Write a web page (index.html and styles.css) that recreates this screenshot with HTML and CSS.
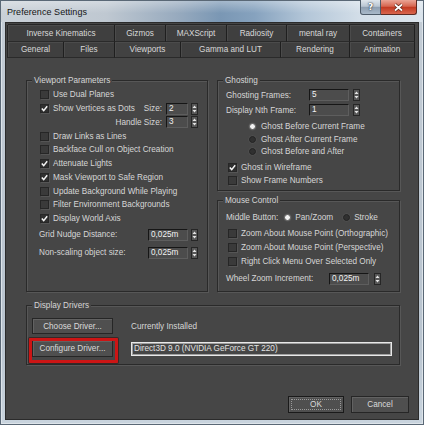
FILE: index.html
```html
<!DOCTYPE html>
<html>
<head>
<meta charset="utf-8">
<title>Preference Settings</title>
<link rel="stylesheet" href="styles.css">
</head>
<body>
<div class="window">
  <div class="titlebar">
    <span class="title">Preference Settings</span>
    <div class="capbtns">
      <div class="capbtn help">?</div>
      <div class="capbtn close"><svg width="11" height="9" viewBox="0 0 11 9"><path d="M2 1.5 9 7.5 M9 1.5 2 7.5" class="xo"/><path d="M2 1.5 9 7.5 M9 1.5 2 7.5" class="xi"/></svg></div>
    </div>
  </div>
  <div class="client">
    <div class="tabs">
      <div class="tabrow row1">
        <div class="tab">Inverse Kinematics</div>
        <div class="tab">Gizmos</div>
        <div class="tab">MAXScript</div>
        <div class="tab">Radiosity</div>
        <div class="tab">mental ray</div>
        <div class="tab">Containers</div>
      </div>
      <div class="tabrow row2">
        <div class="tab">General</div>
        <div class="tab">Files</div>
        <div class="tab active">Viewports</div>
        <div class="tab">Gamma and LUT</div>
        <div class="tab">Rendering</div>
        <div class="tab">Animation</div>
      </div>
    </div>

    <div class="cols">
      <div class="group vp">
        <span class="legend">Viewport Parameters</span>
        <div class="row c"><span class="cb"></span><span>Use Dual Planes</span></div>
        <div class="row c"><span class="cb on"><svg width="9" height="9" viewBox="0 0 9 9"><path d="M1.8 4.4 3.7 6.6 7.2 2.2"/></svg></span><span>Show Vertices as Dots</span><span class="spacer"></span><span class="plabel">Size:</span><span class="field w22">2</span><span class="arr"><svg width="7" height="12" viewBox="0 0 7 12"><rect x=".5" y=".5" width="6" height="11"/><path d="M1.5 5h4L3.5 2.5z M1.5 7h4L3.5 9.5z"/></svg></span></div>
        <div class="row r"><span class="plabel">Handle Size:</span><span class="field w22">3</span><span class="arr"><svg width="7" height="12" viewBox="0 0 7 12"><rect x=".5" y=".5" width="6" height="11"/><path d="M1.5 5h4L3.5 2.5z M1.5 7h4L3.5 9.5z"/></svg></span></div>
        <div class="row c"><span class="cb"></span><span>Draw Links as Lines</span></div>
        <div class="row c"><span class="cb"></span><span>Backface Cull on Object Creation</span></div>
        <div class="row c"><span class="cb on"><svg width="9" height="9" viewBox="0 0 9 9"><path d="M1.8 4.4 3.7 6.6 7.2 2.2"/></svg></span><span>Attenuate Lights</span></div>
        <div class="row c"><span class="cb on"><svg width="9" height="9" viewBox="0 0 9 9"><path d="M1.8 4.4 3.7 6.6 7.2 2.2"/></svg></span><span>Mask Viewport to Safe Region</span></div>
        <div class="row c"><span class="cb"></span><span>Update Background While Playing</span></div>
        <div class="row c"><span class="cb"></span><span>Filter Environment Backgrounds</span></div>
        <div class="row c"><span class="cb on"><svg width="9" height="9" viewBox="0 0 9 9"><path d="M1.8 4.4 3.7 6.6 7.2 2.2"/></svg></span><span>Display World Axis</span></div>
        <div class="row s s1"><span>Grid Nudge Distance:</span><span class="spacer"></span><span class="field w40">0,025m</span><span class="arr"><svg width="7" height="12" viewBox="0 0 7 12"><rect x=".5" y=".5" width="6" height="11"/><path d="M1.5 5h4L3.5 2.5z M1.5 7h4L3.5 9.5z"/></svg></span></div>
        <div class="row s s2"><span>Non-scaling object size:</span><span class="spacer"></span><span class="field w40">0,025m</span><span class="arr"><svg width="7" height="12" viewBox="0 0 7 12"><rect x=".5" y=".5" width="6" height="11"/><path d="M1.5 5h4L3.5 2.5z M1.5 7h4L3.5 9.5z"/></svg></span></div>
      </div>

      <div class="rcol">
        <div class="group ghost">
          <span class="legend">Ghosting</span>
          <div class="row g"><span class="glabel">Ghosting Frames:</span><span class="field w40">5</span><span class="arr a4"><svg width="7" height="12" viewBox="0 0 7 12"><rect x=".5" y=".5" width="6" height="11"/><path d="M1.5 5h4L3.5 2.5z M1.5 7h4L3.5 9.5z"/></svg></span></div>
          <div class="row g"><span class="glabel">Display Nth Frame:</span><span class="field w40">1</span><span class="arr a4"><svg width="7" height="12" viewBox="0 0 7 12"><rect x=".5" y=".5" width="6" height="11"/><path d="M1.5 5h4L3.5 2.5z M1.5 7h4L3.5 9.5z"/></svg></span></div>
          <div class="radios">
            <div class="row rd"><span class="rb on"></span><span>Ghost Before Current Frame</span></div>
            <div class="row rd"><span class="rb"></span><span>Ghost After Current Frame</span></div>
            <div class="row rd"><span class="rb"></span><span>Ghost Before and After</span></div>
          </div>
          <div class="checks">
            <div class="row gc"><span class="cb on"><svg width="9" height="9" viewBox="0 0 9 9"><path d="M1.8 4.4 3.7 6.6 7.2 2.2"/></svg></span><span>Ghost in Wireframe</span></div>
            <div class="row gc"><span class="cb"></span><span>Show Frame Numbers</span></div>
          </div>
        </div>

        <div class="group mouse">
          <span class="legend">Mouse Control</span>
          <div class="row mb"><span>Middle Button:</span><span class="rb on r1"></span><span>Pan/Zoom</span><span class="rb r2"></span><span>Stroke</span></div>
          <div class="mchecks">
            <div class="row gc m"><span class="cb"></span><span>Zoom About Mouse Point (Orthographic)</span></div>
            <div class="row gc m"><span class="cb"></span><span>Zoom About Mouse Point (Perspective)</span></div>
            <div class="row gc m"><span class="cb"></span><span>Right Click Menu Over Selected Only</span></div>
          </div>
          <div class="row wz"><span class="wlabel">Wheel Zoom Increment:</span><span class="field w40">0,025m</span><span class="arr a5"><svg width="7" height="12" viewBox="0 0 7 12"><rect x=".5" y=".5" width="6" height="11"/><path d="M1.5 5h4L3.5 2.5z M1.5 7h4L3.5 9.5z"/></svg></span></div>
        </div>
      </div>
    </div>

    <div class="group dd">
      <span class="legend">Display Drivers</span>
      <div class="ddgrid">
        <div class="btn drv">Choose Driver...</div>
        <div class="installed">Currently Installed</div>
        <div class="btnwrap"><div class="btn drv">Configure Driver...</div><span class="hl"></span></div>
        <div class="driverfield">Direct3D 9.0 (NVIDIA GeForce GT 220)</div>
      </div>
    </div>

    <div class="footer">
      <div class="btn ok"><span class="focus">OK</span></div>
      <div class="btn cancel">Cancel</div>
    </div>
  </div>
</div>
</body>
</html>
```

FILE: styles.css
```css
* { box-sizing: border-box; }
html, body { margin: 0; padding: 0; }
body {
  width: 424px;
  height: 425px;
  overflow: hidden;
  background: #ffffff;
  font-family: "Liberation Sans", Arial, sans-serif;
  font-size: 8.2px;
  color: #d6d6d6;
}

.window {
  width: 424px;
  height: 425px;
  display: flex;
  flex-direction: column;
  padding: 0 5px 5px;
  background: linear-gradient(180deg, #c3ccd5 0%, #b9c4cf 80%, #c9d4de 100%);
  box-shadow: inset 0 0 0 1px #5a6876, inset 0 0 0 2px #dde4ea;
}

/* title bar */
.titlebar {
  height: 22px;
  margin: 0 -5px;
  padding: 0 7px 0 7px;
  display: flex;
  justify-content: space-between;
  align-items: flex-start;
  background:
    linear-gradient(180deg, rgba(255,255,255,0.35) 0%, rgba(255,255,255,0) 60%),
    linear-gradient(90deg, #cad1d8 0%, #bfc8d1 25%, #97aabe 42%, #7a97b4 52%, #86a2be 60%, #b3c6d8 72%, #d3dee8 85%, #dbe4ec 100%);
  box-shadow: inset 1px 1px 0 #5a6876, inset -1px 0 0 #5a6876;
}
.title {
  font-size: 9px;
  line-height: 22px;
  margin-top: 1px;
  color: #151515;
  letter-spacing: 0.05px;
}
.capbtns { display: flex; height: 15px; }
.capbtn {
  height: 15px;
  display: flex;
  align-items: center;
  justify-content: center;
  color: #fff;
}
.help {
  width: 21px;
  border: 1px solid #4d5b69;
  border-top: none;
  border-radius: 0 0 0 3px;
  background: linear-gradient(180deg, #dfe6ec 0%, #b9c6d3 45%, #8e9fb1 52%, #a9b9c9 100%);
  font-family: "DejaVu Sans", sans-serif;
  font-weight: bold;
  font-size: 9px;
  text-shadow: 0 0 2px #2a3440, 0 0 1px #2a3440;
}
.close {
  width: 36px;
  border: 1px solid #5d2a22;
  border-top: none;
  border-left: none;
  border-radius: 0 0 3px 0;
  background: linear-gradient(180deg, #eaa596 0%, #d66650 45%, #c23a22 52%, #d9664e 100%);
}
.close .xo { fill: none; stroke: #5a2418; stroke-width: 3.2; }
.close .xi { fill: none; stroke: #ffffff; stroke-width: 1.7; }

/* client */
.client {
  flex: 1;
  display: flex;
  flex-direction: column;
  background: #464646;
  border: 1px solid #2b2b2b;
}

/* tabs */
.tabs {
  margin: 2px 0 0 2px;
  width: 407px;
  box-shadow: 0 -1px 0 #262626, -1px 0 0 #262626;
}
.tabrow { display: grid; }
.row1 { height: 17px; grid-template-columns: 107px 51px 61px 60px 63px 65px; }
.row2 { height: 16px; grid-template-columns: 56px 51px 66px 100px 69px 65px; }
.tab {
  display: flex;
  align-items: center;
  justify-content: center;
  background: #3f3f3f;
  border-right: 1px solid #1f1f1f;
  border-bottom: 1px solid #2a2a2a;
  box-shadow: inset 1px 1px 0 #4b4b4b;
  color: #d8d8d8;
  white-space: nowrap;
}
.tab.active { background: #424242; }

/* layout */
.cols {
  display: flex;
  margin-top: 22px;
  padding-left: 20px;
}
.rcol {
  margin-left: 9px;
  width: 183px;
  display: flex;
  flex-direction: column;
  gap: 9px;
}

.group {
  position: relative;
  border: 1px solid #2a2a2a;
  box-shadow: inset 1px 1px 0 #575757, 1px 1px 0 #575757;
}
.legend {
  position: absolute;
  top: -6px;
  left: 5px;
  padding: 0 2px;
  line-height: 11px;
  background: #464646;
  color: #d6d6d6;
  white-space: nowrap;
}

.row {
  display: flex;
  align-items: center;
  white-space: nowrap;
}
.spacer { flex: 1; }

/* viewport parameters */
.vp {
  width: 182px;
  height: 212px;
  padding: 7px 9px 0 12px;
}
.vp .row { height: 13.75px; }
.vp .row.c { padding-left: 1px; }
.vp .row.r { justify-content: flex-end; }
.vp .row.s { height: 14px; }
.vp .s1 { margin-top: 2px; }
.vp .s2 { margin-top: 4px; }
.plabel { margin-right: 4px; }

/* checkbox */
.cb {
  width: 9px;
  height: 9px;
  flex: none;
  margin-right: 4px;
  background: #3a3a3a;
  border: 1px solid #262626;
  box-shadow: 1px 1px 0 #555555;
  position: relative;
}
.cb svg {
  position: absolute;
  left: -1px;
  top: -1px;
}
.cb svg path { fill: none; stroke: #f4f4f4; stroke-width: 1.5; }
.cb.on { background: #2f2f2f; }

/* radio */
.rb {
  width: 7px;
  height: 7px;
  flex: none;
  border-radius: 50%;
  background: #303030;
  border: 1px solid #222222;
  box-shadow: 0 0 0 0.5px #555555;
  margin-right: 5px;
}
.rb.on {
  background: #f2f2f2;
  border-color: #5a5a5a;
}

/* spinner fields */
.field {
  height: 12px;
  flex: none;
  padding-left: 2px;
  line-height: 10px;
  background: #4c4c4c;
  border-top: 1px solid #161616;
  border-left: 1px solid #161616;
  border-bottom: 1px solid #5e5e5e;
  border-right: 1px solid #5e5e5e;
  color: #f2f2f2;
}
.w22 { width: 22px; }
.w40 { width: 40px; }
.arr { width: 7px; height: 12px; flex: none; margin-left: 3px; display: flex; }
.arr.a4 { margin-left: 4px; }
.arr.a5 { margin-left: 5px; }
.arr rect { fill: #575757; stroke: #262626; stroke-width: 1; }
.arr path { fill: #e4e4e4; }

/* ghosting */
.ghost {
  height: 111px;
  padding: 6.5px 0 0 8px;
}
.ghost .row.g { height: 15px; }
.glabel { width: 83px; }
.radios { margin-top: 3px; }
.row.rd { height: 12.5px; padding-left: 23px; }
.checks { margin-top: 2.5px; }
.row.gc { height: 13px; padding-left: 2px; }

/* mouse control */
.mouse {
  height: 92px;
  padding: 9px 0 0 8px;
}
.row.mb { height: 14px; }
.rb.r1 { margin-left: 6px; margin-right: 4px; }
.rb.r2 { margin-left: 10px; margin-right: 4px; }
.mchecks { margin-top: 2px; }
.row.gc.m { height: 14px; }
.row.wz { height: 14px; margin-top: 3.5px; }
.wlabel { width: 103px; }

/* display drivers */
.dd {
  margin: 13px 0 0 20px;
  width: 374px;
  height: 60px;
  padding: 12px 0 0 5px;
}
.ddgrid {
  display: grid;
  grid-template-columns: 81px 261px;
  grid-template-rows: 16px 17px;
  column-gap: 18px;
  row-gap: 6px;
  align-items: center;
}
.btn {
  display: flex;
  align-items: center;
  justify-content: center;
  background: #4f4f4f;
  border: 1px solid #262626;
  box-shadow: inset 1px 1px 0 #626262;
  color: #dadada;
  white-space: nowrap;
}
.btn.drv { height: 100%; }
.ddgrid > .btn.drv { height: 16px; }
.btnwrap { position: relative; height: 17px; }
.btnwrap .btn { height: 17px; }
.hl {
  position: absolute;
  left: -3px;
  top: -2px;
  right: -5px;
  bottom: -6px;
  border: 3px solid #cc1515;
  border-radius: 1px;
  box-shadow: 0 0 0 1px rgba(40, 10, 10, 0.5);
}
.installed { color: #d6d6d6; }
.driverfield {
  height: 14px;
  align-self: center;
  padding-left: 2px;
  line-height: 11px;
  border: 1px solid #e8e8e8;
  box-shadow: inset 0 0 0 1px #a0a0a0;
  color: #e2e2e2;
  white-space: nowrap;
  overflow: hidden;
}

/* footer */
.footer {
  display: flex;
  justify-content: flex-end;
  gap: 7px;
  margin-top: 31px;
  padding-right: 9px;
}
.footer .btn { height: 17px; }
.ok {
  width: 56px;
  border-color: #1a1a1a;
  position: relative;
}
.ok .focus {
  position: absolute;
  inset: 2px;
  border: 1px dotted #9a9a9a;
  display: flex;
  align-items: center;
  justify-content: center;
}
.cancel { width: 58px; }
```
